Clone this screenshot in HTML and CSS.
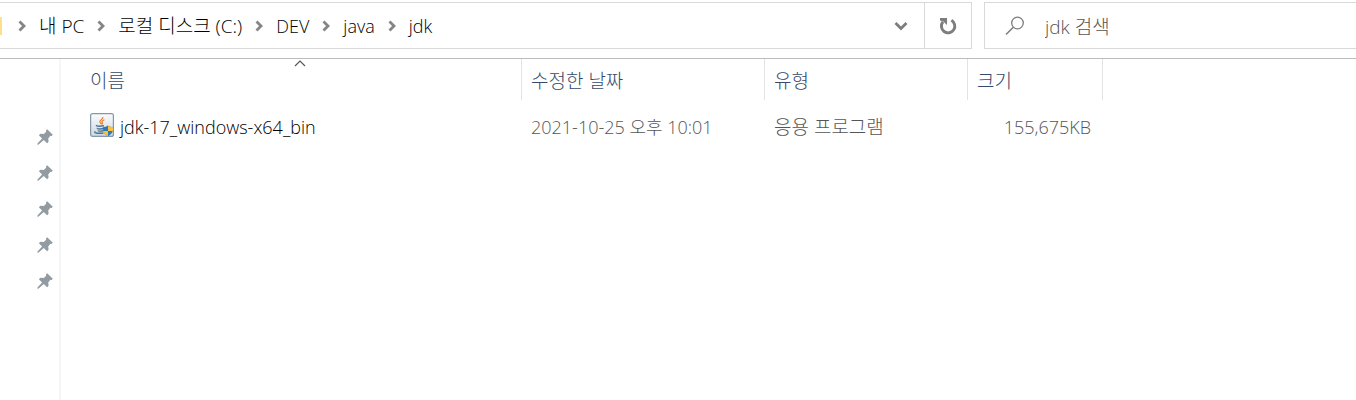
FILE: index.html
```
<!DOCTYPE html>
<html lang="ko">
<head>
  <meta charset="UTF-8" />
  <meta name="viewport" content="width=device-width, initial-scale=1" />
  <title>jdk</title>
  <link rel="stylesheet" href="styles.css">
</head>
<body>

  <svg class="symbols" aria-hidden="true">
    <symbol id="chevron" viewBox="0 0 8 12">
      <path d="M1.5 1.5L6 6l-4.500 4.500" fill="none" stroke="#858585" stroke-width="2.800"/>
    </symbol>
    <symbol id="pin" viewBox="0 0 16 16">
      <path d="M10.200 0.300L15.800 5.800 14.600 7l-1.200-.2-2.200 2.600.4 3.400-1.500 1.400-3.300-3.300L1.600 15.500.3 15.800.5 14.400l4.600-5L1.900 6.200l1.500-1.400 3.400.3L9.200 2.800 9 1.500z" fill="#919ba1"/>
    </symbol>
  </svg>

  <header class="toolbar">
    <div class="address">
      <span class="folder"></span>
      <nav class="crumbs" aria-label="경로">
        <svg class="chevron"><use href="#chevron"/></svg>
        <a href="#" class="hangul">내 PC</a>
        <svg class="chevron"><use href="#chevron"/></svg>
        <a href="#" class="hangul">로컬 디스크 (C:)</a>
        <svg class="chevron"><use href="#chevron"/></svg>
        <a href="#">DEV</a>
        <svg class="chevron"><use href="#chevron"/></svg>
        <a href="#">java</a>
        <svg class="chevron"><use href="#chevron"/></svg>
        <a href="#">jdk</a>
      </nav>
      <button class="icon-btn" aria-label="이전 위치">
        <svg width="14" height="10" viewBox="0 0 14 10">
          <path d="M1.500 2L7 7.500 12.500 2" fill="none" stroke="#7d7d7d" stroke-width="2.800"/>
        </svg>
      </button>
      <button class="icon-btn refresh" aria-label="새로 고침">
        <svg width="18" height="18" viewBox="0 0 18 18">
          <path d="M12.400 3.300A6.700 6.700 0 1 1 4 4.800" fill="none" stroke="#7d7d7d" stroke-width="2.900"/>
          <path d="M1 1H8V8L5.600 5.800 4.500 4.500 1 3.600z" fill="#7d7d7d"/>
        </svg>
      </button>
    </div>
    <div class="search">
      <svg width="20" height="20" viewBox="0 0 20 20">
        <circle cx="12.500" cy="7" r="5.800" fill="none" stroke="#7c7c7c" stroke-width="1.300"/>
        <path d="M8.300 11.200L1 18.500" stroke="#7c7c7c" stroke-width="1.500"/>
      </svg>
      <input type="search" class="hangul" placeholder="jdk 검색" aria-label="jdk 검색">
    </div>
  </header>

  <main class="content">
    <aside class="sidebar">
      <svg class="pin"><use href="#pin"/></svg>
      <svg class="pin"><use href="#pin"/></svg>
      <svg class="pin"><use href="#pin"/></svg>
      <svg class="pin"><use href="#pin"/></svg>
      <svg class="pin"><use href="#pin"/></svg>
    </aside>

    <table class="files">
      <thead>
        <tr class="hangul">
          <th class="col-name">
            이름
            <svg class="sort" width="12" height="7" viewBox="0 0 12 7">
              <path d="M1 6L6 1l5 5" fill="none" stroke="#555" stroke-width="1.200"/>
            </svg>
          </th>
          <th class="col-date">수정한 날짜</th>
          <th class="col-type">유형</th>
          <th class="col-size">크기</th>
        </tr>
      </thead>
      <tbody>
        <tr>
          <td class="col-name">
            <div class="file">
              <svg width="24" height="24" viewBox="0 0 24 24">
                <defs>
                  <linearGradient id="tile" x1="0" y1="0" x2="0" y2="1">
                    <stop offset="0" stop-color="#fcfcfc"/>
                    <stop offset="1" stop-color="#cfd6dd"/>
                  </linearGradient>
                </defs>
                <rect x="0.600" y="0.600" width="22.800" height="22.800" rx="2" fill="url(#tile)" stroke="#8298ac" stroke-width="1.200"/>
                <path d="M12.800 4c1 2-3.300 3-3 4.800.1 1 1.300 1.400 1.800 2.400M14.400 6.800c-2 .8-3 1.600-2.200 2.700.5.700.5 1.100-.3 1.800" fill="none" stroke="#e8772a" stroke-width="1.200"/>
                <path d="M7 12.300c-2 .8 1.500 1.300 7 .4M7.500 15c-1 .9 2.500 1.300 6 .5M8.500 17.300c-.6.800 2 1.100 4.500.5M5.500 18.600c-2.500 1.200 2 2.200 8 1.400" fill="none" stroke="#4c7593" stroke-width="1.400"/>
                <path d="M18 12.500c1.600 1.200 3.300 1.700 5.200 1.700 0 4.300-1.300 7-5.200 9-3.900-2-5.200-4.700-5.200-9 1.900 0 3.600-.5 5.200-1.700z" fill="#2b78bd"/>
                <path d="M18 12.500c1.600 1.200 3.300 1.700 5.200 1.700 0 1.400-.1 2.600-.4 3.800H18zM18 18v5.200c-2.600-1.300-4.100-2.900-4.800-5.200z" fill="#f9c13c"/>
              </svg>
              <span>jdk-17_windows-x64_bin</span>
            </div>
          </td>
          <td class="col-date">2021-10-25 오후 10:01</td>
          <td class="col-type hangul">응용 프로그램</td>
          <td class="col-size">155,675KB</td>
        </tr>
      </tbody>
    </table>
  </main>

</body>
</html>
```
FILE: styles.css
```
* {
  box-sizing: border-box;
}

body {
  margin: 0;
  min-height: 100vh;
  display: flex;
  flex-direction: column;
  background: #fff;
  color: #000;
  font-family: "Open Sans", "Noto Sans CJK KR", sans-serif;
  font-size: 18px;
  font-weight: 300;
  line-height: 24px;
  overflow-x: hidden;
}

.symbols {
  position: absolute;
  width: 0;
  height: 0;
}

.toolbar {
  display: flex;
  gap: 12px;
  padding: 2px 0 9px;
  border-bottom: 1px solid #bcbcbc;
}

.address {
  flex: 1;
  display: flex;
  align-items: center;
  height: 47px;
  border: 1px solid #d9d9d9;
  border-left: none;
}

.folder {
  width: 2px;
  height: 18px;
  background: #ffe08a;
}

.crumbs {
  flex: 1;
  display: flex;
  align-items: center;
  gap: 13px;
  padding-left: 16px;
}

.crumbs a {
  color: #000;
  text-decoration: none;
  white-space: nowrap;
}

/* Korean labels run a little small next to the Latin ones */
.crumbs .hangul,
.search .hangul,
.files .hangul {
  font-size: 19px;
}

.chevron {
  width: 8px;
  height: 12px;
}

.icon-btn {
  width: 46px;
  height: 100%;
  display: flex;
  align-items: center;
  justify-content: center;
  padding: 0;
  border: none;
  background: none;
}

.refresh {
  width: 47px;
  border-left: 1px solid #d9d9d9;
}

.search {
  width: 372px;
  display: flex;
  align-items: center;
  gap: 20px;
  padding-left: 20px;
  border: 1px solid #d9d9d9;
  border-right: none;
}

.search input {
  flex: 1;
  min-width: 0;
  padding: 2px 0 0;
  border: none;
  outline: none;
  background: none;
  font: inherit;
}

.search input::placeholder {
  color: #555;
}

.content {
  flex: 1;
  display: flex;
  align-items: flex-start;
}

.sidebar {
  align-self: stretch;
  width: 61px;
  display: flex;
  flex-direction: column;
  align-items: flex-end;
  gap: 20px;
  padding: 70px 6px 0 0;
  border-right: 2px solid #f6f6f6;
}

.pin {
  width: 16px;
  height: 16px;
}

.files {
  width: 1024px;
  margin-left: 18px;
  border-collapse: separate;
  border-spacing: 0;
  table-layout: fixed;
}

.files th {
  position: relative;
  height: 41px;
  padding: 2px 9px 0;
  border-right: 1px solid #e3e3e3;
  color: #34496b;
  font-weight: 300;
  text-align: left;
}

.files td {
  padding: 13px 9px 0;
  color: #555;
  line-height: 28px;
  white-space: nowrap;
}

.files .col-name {
  width: 443px;
  padding-left: 11px;
}

.col-date {
  width: 243px;
}

.col-type {
  width: 203px;
}

.col-size {
  width: 135px;
}

.files td.col-size {
  padding-right: 12px;
  text-align: right;
}

.sort {
  position: absolute;
  top: 1px;
  left: 50%;
  transform: translateX(-50%);
}

.file {
  display: flex;
  align-items: flex-start;
  gap: 6px;
  color: #000;
}
```
